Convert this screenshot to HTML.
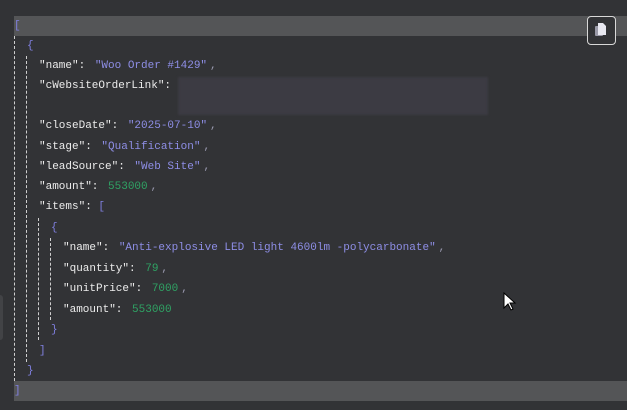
<html><head><style>
body{margin:0;width:627px;height:410px;background:#323336;overflow:hidden;position:relative;font-family:"Liberation Mono",monospace;font-size:11px}
.bar{position:absolute;left:14px;width:613px;height:20px;background:#545557}
.l{position:absolute;white-space:pre;line-height:14px;color:#ececec}
.s{color:#8e8ee6}.n{color:#2fa364}.b{color:#8080e0}.p{color:#9a9ab0;margin-left:3px}
.c{margin-right:3px}
.g{position:absolute;border-left:1px dashed #cfcfcf;width:0}
</style></head><body>
<div class="bar" style="top:16px"></div>
<div class="bar" style="top:381px"></div>
<div class="g" style="left:14px;top:36px;height:345px"></div>
<div class="g" style="left:26px;top:56px;height:306px"></div>
<div class="g" style="left:38px;top:218px;height:122px"></div>
<div class="g" style="left:50px;top:238px;height:82px"></div>
<div style="position:absolute;left:178px;top:77px;width:310px;height:38px;background:#3c3b43;filter:blur(1px)"></div>
<div style="position:absolute;left:0;top:295px;width:3px;height:45px;background:#424346;border-radius:0 3px 3px 0"></div>
<div class="l b" style="left:14px;top:19px">[</div>
<div class="l b" style="left:27px;top:39px">{</div>
<div class="l" style="left:39px;top:59px">"name": <span class="c"></span><span class="s">"Woo Order #1429"</span><span class="p">,</span></div>
<div class="l" style="left:39px;top:79px">"cWebsiteOrderLink":</div>
<div class="l" style="left:39px;top:119px">"closeDate": <span class="c"></span><span class="s">"2025-07-10"</span><span class="p">,</span></div>
<div class="l" style="left:39px;top:140px">"stage": <span class="c"></span><span class="s">"Qualification"</span><span class="p">,</span></div>
<div class="l" style="left:39px;top:160px">"leadSource": <span class="c"></span><span class="s">"Web Site"</span><span class="p">,</span></div>
<div class="l" style="left:39px;top:180px">"amount": <span class="c"></span><span class="n">553000</span><span class="p">,</span></div>
<div class="l" style="left:39px;top:200px">"items": <span class="b">[</span></div>
<div class="l b" style="left:51px;top:221px">{</div>
<div class="l" style="left:63px;top:241px">"name": <span class="c"></span><span class="s">"Anti-explosive LED light 4600lm -polycarbonate"</span><span class="p">,</span></div>
<div class="l" style="left:63px;top:262px">"quantity": <span class="c"></span><span class="n">79</span><span class="p">,</span></div>
<div class="l" style="left:63px;top:282px">"unitPrice": <span class="c"></span><span class="n">7000</span><span class="p">,</span></div>
<div class="l" style="left:63px;top:303px">"amount": <span class="c"></span><span class="n">553000</span></div>
<div class="l b" style="left:51px;top:323px">}</div>
<div class="l b" style="left:39px;top:344px">]</div>
<div class="l b" style="left:27px;top:364px">}</div>
<div class="l b" style="left:14px;top:384px">]</div>
<div style="position:absolute;left:587px;top:16px;width:27px;height:27px;border:1px solid #d8d8d8;border-radius:4px;background:#323336"></div>
<svg style="position:absolute;left:594px;top:22px" width="14" height="16" viewBox="0 0 14 16"><rect x="1" y="4" width="8" height="10" fill="#9a9aa8" rx="1"/><path d="M4 1h5l3 3v9H4z" fill="#e8e8f0"/></svg>
<svg style="position:absolute;left:503px;top:292px" width="14" height="20" viewBox="0 0 14 20"><path d="M1 1v15l4-4 3 6 2-1-3-6h5z" fill="#fff" stroke="#000" stroke-width="1"/></svg>
</body></html>
